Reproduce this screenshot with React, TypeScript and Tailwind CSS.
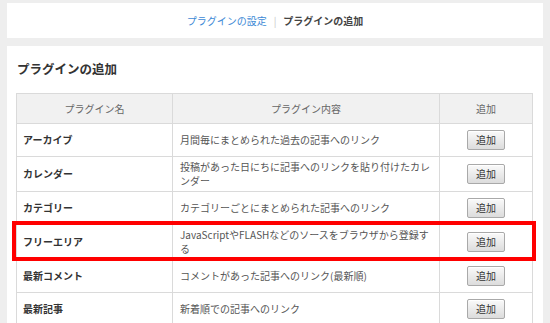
const plugins = [
  { name: 'アーカイブ', desc: '月間毎にまとめられた過去の記事へのリンク' },
  { name: 'カレンダー', desc: '投稿があった日にちに記事へのリンクを貼り付けたカレンダー' },
  { name: 'カテゴリー', desc: 'カテゴリーごとにまとめられた記事へのリンク' },
  { name: 'フリーエリア', desc: 'JavaScriptやFLASHなどのソースをブラウザから登録する' },
  { name: '最新コメント', desc: 'コメントがあった記事へのリンク(最新順)' },
  { name: '最新記事', desc: '新着順での記事へのリンク' },
]

export default function App() {
  return (
    <div
      className="h-[323px] overflow-hidden bg-[#eeeeee] px-[7px] pt-[3px]"
      style={{ fontFamily: '"Noto Sans CJK JP", "Liberation Sans", sans-serif' }}
    >
      <div className="flex h-[35px] items-center justify-center gap-[7px] bg-white text-[10px]">
        <a href="#" className="text-[#3d8ad6]">プラグインの設定</a>
        <span className="text-[#c8c8c8]">|</span>
        <span className="font-bold text-[#444]">プラグインの追加</span>
      </div>

      <div className="mt-[8px] bg-white pb-4 pl-[9px] pr-[11px] pt-[15px]">
        <h1 className="pl-px text-[12.5px] font-bold leading-[16px] text-[#333]">プラグインの追加</h1>

        <div className="relative mt-[16px]">
          <table className="w-[516px] table-fixed border-collapse text-[10px] leading-[14px]">
            <colgroup>
              <col className="w-[156px]" />
              <col className="w-[267px]" />
              <col className="w-[93px]" />
            </colgroup>
            <thead>
              <tr className="bg-[#f1f1f1] text-[#666]">
                <th className="h-[30px] border border-[#dadada] p-0 font-normal">プラグイン名</th>
                <th className="border border-[#dadada] p-0 font-normal">プラグイン内容</th>
                <th className="border border-[#dadada] p-0 font-normal">追加</th>
              </tr>
            </thead>
            <tbody>
              {plugins.map((p) => (
                <tr key={p.name}>
                  <td className="border border-[#dadada] px-[6px] py-[3px] align-middle font-bold text-[#333]">
                    {p.name}
                  </td>
                  <td className="border border-[#dadada] px-[7px] py-[3px] align-middle text-[#555]">
                    {p.desc}
                  </td>
                  <td className="h-[33px] border border-[#dadada] p-0 align-middle">
                    <button
                      type="button"
                      className="mx-auto block h-[20px] w-[38px] rounded-[2px] border border-[#a9a9a9] bg-gradient-to-b from-[#fafafa] to-[#dcdcdc] text-[10px] leading-[18px] text-[#333] shadow-[inset_0_1px_0_#fff]"
                    >
                      追加
                    </button>
                  </td>
                </tr>
              ))}
            </tbody>
          </table>
          {/* highlight around フリーエリア row */}
          <div className="pointer-events-none absolute left-[-4px] right-[-4px] top-[128px] h-[40px] border-4 border-[#ff0000]" />
        </div>
      </div>
    </div>
  )
}
